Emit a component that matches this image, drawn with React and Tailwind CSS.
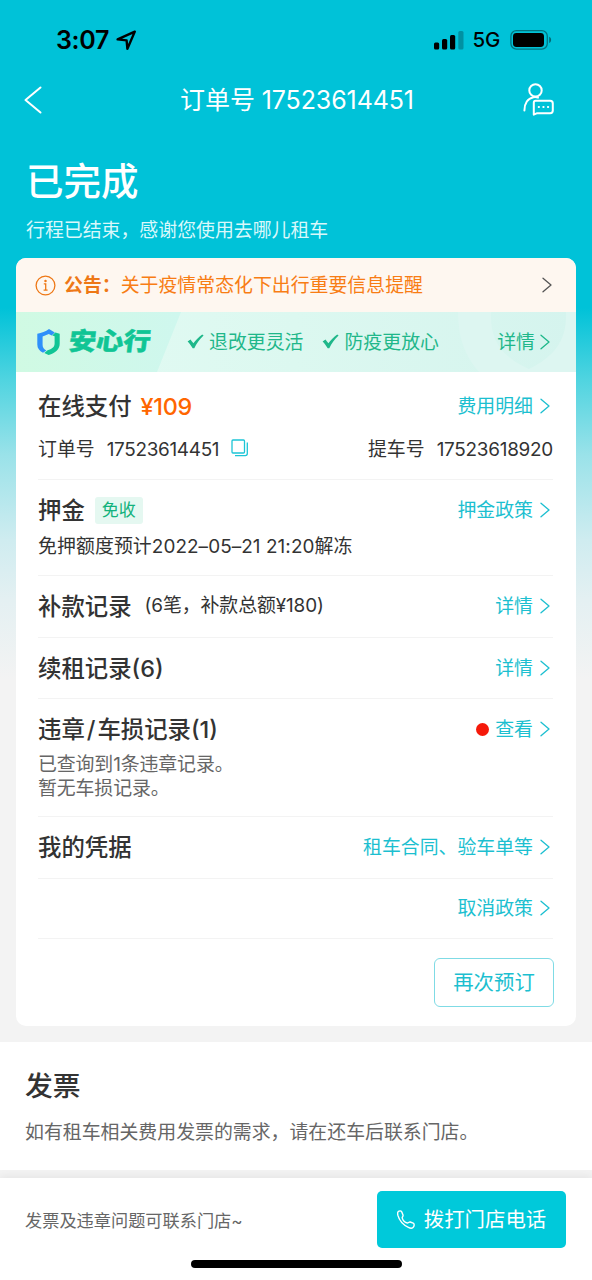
import React from 'react';
import clsx from 'clsx';

const ORDER_NO = '17523614451';
const PICKUP_NO = '17523618920';

function Chevron({ className }) {
  return (
    <svg className={clsx('shrink-0', className)} width="10" height="16" viewBox="0 0 10 16" fill="none" stroke="currentColor" strokeWidth="1.3">
      <path d="M1 1.2L9 8L1 14.8" strokeLinecap="round" strokeLinejoin="round" />
    </svg>
  );
}

function CheckMark() {
  return (
    <svg className="shrink-0" width="17" height="15" viewBox="0 0 17 15" fill="currentColor">
      <path d="M0.6 7.4L3.4 5.6L6.4 9.2C8.6 6.2 11.8 2.8 15.2 0.4L16.6 1.6C12.8 5 9.8 9.2 7.3 14.2H5.7C4.2 11.6 2.6 9.6 0.6 7.4Z" />
    </svg>
  );
}

function StatusBar() {
  return (
    <div className="h-[68px] pt-[22px] pl-[56px] pr-[40px] flex items-start justify-between text-black">
      <div className="flex items-center h-9">
        <span className="text-[25px] leading-9 font-semibold tracking-[-0.3px]">3:07</span>
        <svg className="ml-[7px]" width="21" height="21" viewBox="0 0 21 21" fill="none" stroke="currentColor" strokeWidth="2.4" strokeLinejoin="round">
          <path d="M18.8 1.6L1.6 9.4L10.6 10.4L11.4 18.8Z" />
        </svg>
      </div>
      <div className="flex items-center h-9">
        <svg width="30" height="19" viewBox="0 0 30 19" fill="currentColor">
          <rect x="0" y="11.5" width="5.2" height="7" rx="1.5" />
          <rect x="8" y="8" width="5.2" height="10.5" rx="1.5" />
          <rect x="16" y="4" width="5.2" height="14.5" rx="1.5" />
          <rect x="24.3" y="0" width="5.2" height="18.5" rx="1.5" opacity="0.25" />
        </svg>
        <span className="ml-[9px] text-[20.5px] leading-9 font-medium tracking-[-0.3px]">5G</span>
        <svg className="ml-[10px]" width="42" height="20" viewBox="0 0 42 20">
          <rect x="0.9" y="0.7" width="36.4" height="18.4" rx="5.5" fill="none" stroke="#000" strokeWidth="1.3" opacity="0.4" />
          <rect x="3" y="3" width="31" height="14" rx="3.4" />
          <path d="M39.2 6.8C41.8 8 41.8 11.8 39.2 13Z" opacity="0.45" />
        </svg>
      </div>
    </div>
  );
}

function NavBar() {
  return (
    <div className="h-16 pl-6 pr-[38px] flex items-center justify-between text-white">
      <svg width="18" height="28" viewBox="0 0 18 28" fill="none" stroke="currentColor" strokeWidth="2" strokeLinecap="round" strokeLinejoin="round">
        <path d="M16.5 1.5L1.5 14L16.5 26.5" />
      </svg>
      <h1 className="ml-[29px] pt-[2px] text-[25px] tracking-[-0.1px] whitespace-nowrap">订单号 {ORDER_NO}</h1>
      <svg className="mb-[2px]" width="31" height="33" viewBox="0 0 31 33" fill="none" stroke="currentColor" strokeWidth="2" strokeLinecap="round" strokeLinejoin="round">
        <circle cx="12.5" cy="7.4" r="6.2" />
        <path d="M1.4 27.5C1.4 20.5 4.8 15.4 10.4 14.2C12 13.8 13.6 14 15 14.6" />
        <path d="M12.6 17.8H27.2C28.8 17.8 29.8 18.8 29.8 20.4V27.6C29.8 29.2 28.8 30.2 27.2 30.2H14.2L10.8 31.6V19.8C10.8 18.6 11.4 17.8 12.6 17.8Z" />
        <path d="M15.7 24H16M20.3 24H20.6M24.9 24H25.2" />
      </svg>
    </div>
  );
}

function Notice() {
  return (
    <div className="h-[54px] pl-[19px] pr-6 flex items-center bg-[#fef7f0] text-[#ee7816]">
      <svg className="shrink-0" width="21" height="21" viewBox="0 0 21 21" fill="none" stroke="currentColor" strokeWidth="1.3">
        <circle cx="10.5" cy="10.5" r="9.4" />
        <path d="M8.8 8.8H10.7V15M8.6 15.1H12.6" />
        <circle cx="10.5" cy="5.9" r="0.6" fill="currentColor" />
      </svg>
      <span className="ml-2 pt-[3px] text-[18.9px] font-semibold">公告：</span>
      <span className="pt-[3px] text-[18.9px] text-[#f87d14]">关于疫情常态化下出行重要信息提醒</span>
      <Chevron className="ml-auto text-[#555]" />
    </div>
  );
}

function SafeTripBanner() {
  return (
    <div className="relative h-[60px] bg-linear-to-r from-[#e3fbf3] via-[#dcf8f0] to-[#d5f4ee] text-[#1fb78a]">
      <svg className="absolute inset-0" width="560" height="60" viewBox="0 0 560 60">
        <defs>
          <linearGradient id="safe-left" x1="0" y1="0" x2="1" y2="0">
            <stop offset="0" stopColor="#d0fae3" />
            <stop offset="1" stopColor="#cff7ee" />
          </linearGradient>
        </defs>
        <path d="M0 0H165L141 60H0Z" fill="url(#safe-left)" />
        <path d="M442 0C442 26 449 44 463 60H560V0H550C551 28 539 44 513 57C484 44 474 27 475 0Z" fill="#ddf6f1" />
      </svg>
      <div className="relative h-full pl-[21px] pr-[26px] flex items-center">
        <svg className="shrink-0" width="23" height="26" viewBox="0 0 23 26">
          <path d="M12 0L17.8 3.4L14.7 6.5L11.8 4.9L5.6 7.4V16C5.6 18.4 7 20.2 9.4 21.4L6 23.8C2.4 21.8 0.3 19.2 0.3 15.4V4.7C4.6 4.1 8.6 2.5 12 0Z" fill="#2e90fa" />
          <path d="M18.3 3.4L22.7 4.8V14.8C22.7 20.4 18.4 24.2 11.6 26L7.3 24L10.6 21.3C14.8 20 17.6 18.3 17.6 14.6V7.2L15.2 6.6Z" fill="#10c595" />
        </svg>
        <span className="ml-[9px] w-[82px] inline-block -skew-x-6 scale-y-90 text-[27.3px] leading-none font-black text-[#10c595] [-webkit-text-stroke:0.5px_#10c595]">安心行</span>
        <div className="ml-[36px] flex items-center gap-[5px]">
          <CheckMark />
          <span className="pt-[3px] text-[18.9px]">退改更灵活</span>
        </div>
        <div className="ml-[19px] flex items-center gap-[5px]">
          <CheckMark />
          <span className="pt-[3px] text-[18.9px]">防疫更放心</span>
        </div>
        <span className="ml-auto pt-[3px] text-[18.9px]">详情</span>
        <Chevron className="ml-[5px]" />
      </div>
    </div>
  );
}

function MoreLink({ children, dot }) {
  return (
    <button className="ml-auto pr-[3px] flex items-center text-[18.9px] leading-7 text-[#1cbfd0] whitespace-nowrap">
      {dot && <span className="mr-[6px] size-[13px] rounded-full bg-[#f5190a]" />}
      <span className="pt-[2px]">{children}</span>
      <Chevron className="ml-[7px]" />
    </button>
  );
}

function Section({ className, children }) {
  return <section className={clsx('border-b border-[#f3f3f3]', className)}>{children}</section>;
}

function Title({ children }) {
  return <h2 className="pt-[2px] text-[23.4px] leading-8 font-medium text-[#333] whitespace-nowrap">{children}</h2>;
}

function OrderCard() {
  return (
    <div className="mx-4 h-[768px] rounded-[10px] overflow-hidden bg-white">
      <Notice />
      <SafeTripBanner />
      <div className="pl-[22px] pr-[23px] text-[#333]">
        <Section className="h-[108px] pt-[18px]">
          <div className="flex items-center h-8">
            <Title>在线支付</Title>
            <span className="ml-[9px] pt-[2px] text-[23.4px] font-medium tracking-[-0.3px] text-[#ff6600]">¥109</span>
            <MoreLink>费用明细</MoreLink>
          </div>
          <div className="mt-[14px] flex items-center h-7 text-[18.9px]">
            <span>订单号</span>
            <span className="ml-3 tracking-[-0.3px]">{ORDER_NO}</span>
            <svg className="ml-3 mb-1" width="18" height="18" viewBox="0 0 18 18" fill="none" stroke="#1cc5d6" strokeWidth="1.3">
              <rect x="1" y="1" width="12.5" height="13" rx="1" />
              <path d="M16.3 3.6V14.5C16.3 15.8 15.6 16.6 14.3 16.6H4" />
            </svg>
            <span className="ml-auto">提车号</span>
            <span className="ml-3 tracking-[-0.25px]">{PICKUP_NO}</span>
          </div>
        </Section>

        <Section className="h-24 pt-[14px]">
          <div className="flex items-center h-8">
            <Title>押金</Title>
            <span className="ml-[10px] h-[27px] px-[7px] pt-[2px] flex items-center rounded-[3px] bg-[#e5f8f1] text-[17px] text-[#12b27c]">免收</span>
            <MoreLink>押金政策</MoreLink>
          </div>
          <p className="mt-[7px] text-[18.9px] leading-7 tracking-[0.08px]">免押额度预计2022–05–21 21:20解冻</p>
        </Section>

        <Section className="h-[62px] pb-[2px] flex items-center">
          <Title>补款记录</Title>
          <span className="ml-[13px] pt-[2px] text-[18.9px] tracking-[-0.1px]">(6笔，补款总额¥180)</span>
          <MoreLink>详情</MoreLink>
        </Section>

        <Section className="h-[61px] flex items-center">
          <Title>续租记录(6)</Title>
          <MoreLink>详情</MoreLink>
        </Section>

        <Section className="h-[118px] pt-[14px]">
          <div className="flex items-center h-8">
            <Title>违章<span className="mx-[2px]">/</span>车损记录(1)</Title>
            <MoreLink dot>查看</MoreLink>
          </div>
          <div className="mt-2 text-[18.9px] leading-[23.5px] text-[#666] tracking-[-0.1px]">
            <p>已查询到1条违章记录。</p>
            <p>暂无车损记录。</p>
          </div>
        </Section>

        <Section className="h-[62px] pb-[2px] flex items-center">
          <Title>我的凭据</Title>
          <MoreLink>租车合同、验车单等</MoreLink>
        </Section>

        <Section className="h-[60px] pb-[1px] flex items-center">
          <MoreLink>取消政策</MoreLink>
        </Section>

        <div className="-mr-px pt-[19px] flex justify-end">
          <button className="w-[120px] h-[49px] pt-[2px] rounded-md border border-[#7fdbe5] text-[20.4px] text-[#1cbfd0]">再次预订</button>
        </div>
      </div>
    </div>
  );
}

function Invoice() {
  return (
    <section className="mt-4 h-[128px] px-[25px] pt-6 bg-white">
      <h2 className="text-[27.8px] leading-10 font-medium text-[#333]">发票</h2>
      <p className="mt-[13px] text-[18.9px] leading-7 text-[#666]">如有租车相关费用发票的需求，请在还车后联系门店。</p>
    </section>
  );
}

function BottomBar() {
  return (
    <footer className="h-[102px] bg-white shadow-[0_-2px_8px_rgba(0,0,0,0.06)] flex flex-col items-center">
      <div className="w-full h-[82px] pl-[25px] pr-[26px] flex items-center justify-between">
        <span className="pt-[3px] text-[17.2px] text-[#666]">发票及违章问题可联系门店~</span>
        <button className="w-[189px] h-[57px] flex items-center justify-center rounded-[5px] bg-[#00c9da] text-white">
          <svg className="mr-[9px]" width="18" height="19" viewBox="0 0 18 19" fill="none" stroke="currentColor" strokeWidth="1.4" strokeLinejoin="round">
            <path d="M1.2 1.6C2.4 0.6 4 0.6 4.7 1.8L6 5C6.4 6.2 5.2 6.7 5.2 7.8C5.8 10.2 8 12.4 10.4 13C11.5 13 12 11.7 13.2 12L16.2 13.2C17.3 13.8 17.4 15.4 16.7 16.6C15.8 18.2 13.4 18.4 11.4 17.4C6 14.8 2.4 10.8 0.9 5.4C0.5 3.8 0.5 2.4 1.2 1.6Z" />
          </svg>
          <span className="pt-[3px] text-[20.4px]">拨打门店电话</span>
        </button>
      </div>
      <div className="w-[211px] h-2 rounded-full bg-black" />
    </footer>
  );
}

export default function App() {
  return (
    <div className="w-[592px] h-[1280px] overflow-hidden flex flex-col font-[Inter,'Noto_Sans_CJK_SC',sans-serif] bg-[#f3f3f3] bg-[linear-gradient(180deg,#00c2d8_0px,#00c2d8_308px,#50d4e0_380px,#9ae2e9_455px,#cfecf0_540px,#e4f0f2_600px,#f3f3f3_680px)]">
      <StatusBar />
      <NavBar />
      <header className="h-[126px] pl-[26px] pt-[25px] text-white">
        <p className="text-[37.5px] leading-[50px] font-medium">已完成</p>
        <p className="mt-[10px] text-[18.9px] leading-7 text-[#d9f8fb]">行程已结束，感谢您使用去哪儿租车</p>
      </header>
      <OrderCard />
      <Invoice />
      <div className="grow" />
      <BottomBar />
    </div>
  );
}
